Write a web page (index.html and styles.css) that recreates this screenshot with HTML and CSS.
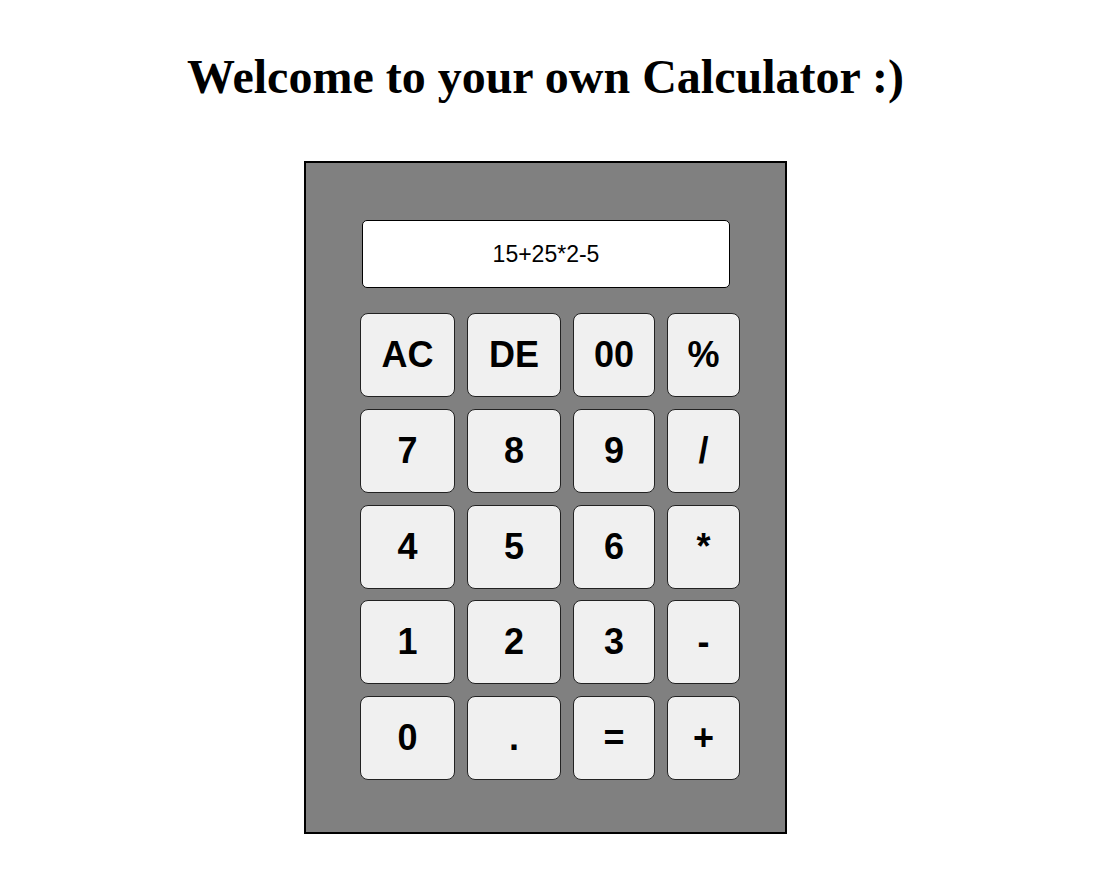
FILE: index.html
```html
<!DOCTYPE html>
<html>
<head>
<meta charset="utf-8">
<link rel="stylesheet" href="styles.css">
</head>
<body>
<div class="page">
  <h1 class="title">Welcome to your own Calculator :)</h1>
  <div class="calc">
    <div class="display">15+25*2-5</div>
    <div class="keys">
      <button class="key">AC</button>
      <button class="key">DE</button>
      <button class="key">00</button>
      <button class="key">%</button>
      <button class="key">7</button>
      <button class="key">8</button>
      <button class="key">9</button>
      <button class="key">/</button>
      <button class="key">4</button>
      <button class="key">5</button>
      <button class="key">6</button>
      <button class="key">*</button>
      <button class="key">1</button>
      <button class="key">2</button>
      <button class="key">3</button>
      <button class="key">-</button>
      <button class="key">0</button>
      <button class="key">.</button>
      <button class="key">=</button>
      <button class="key">+</button>
    </div>
  </div>
</div>
</body>
</html>
```
FILE: styles.css
```css
* { box-sizing: border-box; }
body { margin: 0; background: #fff; }
.page { width: 1091px; text-align: center; }
.title {
  margin: 49px 0 0;
  font-family: "Liberation Serif", "Times New Roman", serif;
  font-weight: bold;
  font-size: 48px;
  line-height: 55px;
  color: #000;
}
.calc {
  width: 483px;
  height: 673px;
  margin: 57px auto 0;
  border: 2px solid #000;
  background: #808080;
  padding: 57px 0 0 54px;
  text-align: left;
}
.display {
  margin-left: 2px;
  width: 368px;
  height: 68px;
  border: 1px solid #000;
  border-radius: 5px;
  background: #fff;
  font-family: "Liberation Sans", Arial, sans-serif;
  font-size: 23px;
  color: #000;
  display: flex;
  align-items: center;
  justify-content: center;
}
.keys {
  margin-top: 25px;
  display: grid;
  grid-template-columns: 95px 94px 82px 73px;
  grid-auto-rows: 84px;
  column-gap: 12px;
  row-gap: 11.75px;
}
.key {
  margin: 0;
  padding: 0;
  background: #f0f0f0;
  border: 1px solid #222;
  border-radius: 8px;
  font-family: "Liberation Sans", Arial, sans-serif;
  font-weight: bold;
  font-size: 36px;
  color: #000;
}
```
